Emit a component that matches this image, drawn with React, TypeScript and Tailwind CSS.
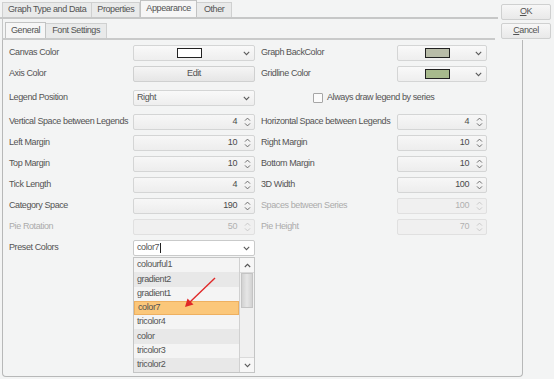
import React from 'react'

const ChevronDown = ({ color = '#5a5a5a' }: { color?: string }) => (
  <svg width="7" height="5" viewBox="0 0 7 5">
    <path d="M0.8 0.9 L3.5 3.6 L6.2 0.9" fill="none" stroke={color} strokeWidth="1.1" />
  </svg>
)

const SpinArrows = ({ disabled }: { disabled?: boolean }) => (
  <svg width="7" height="12" viewBox="0 0 7 12">
    <path
      d="M1 4.6 L3.5 2.1 L6 4.6 M1 7.4 L3.5 9.9 L6 7.4"
      fill="none"
      stroke={disabled ? '#c9c9c9' : '#6a6a6a'}
      strokeWidth="1"
    />
  </svg>
)

const Label = ({ children, disabled }: { children: React.ReactNode; disabled?: boolean }) => (
  <div className={`flex items-center h-[16px] whitespace-nowrap ${disabled ? 'text-[#ababab]' : 'text-[#535353]'}`}>
    {children}
  </div>
)

const ColorCombo = ({ swatch }: { swatch: string }) => (
  <div className="h-[16px] border border-[#d4d5d5] rounded-[2px] bg-gradient-to-b from-[#f9f9f9] to-[#eeeeee] flex items-center">
    <div className="flex-1 flex justify-center pl-[6px]">
      <div className={`w-[25px] h-[10px] border border-[#222] ${swatch}`} />
    </div>
    <div className="w-[16px] flex justify-center">
      <ChevronDown />
    </div>
  </div>
)

const Spinner = ({ value, disabled }: { value: number; disabled?: boolean }) => (
  <div
    className={`h-[16px] border rounded-[2px] flex items-center ${
      disabled ? 'border-[#e0e0e0] bg-[#f0f0f0] text-[#b0b0b0]' : 'border-[#d4d5d5] bg-gradient-to-b from-[#f7f7f7] to-[#ededed] text-[#4a4a4a]'
    }`}
  >
    <div className="flex-1 text-right pr-[3px]">{value}</div>
    <div className="w-[14px] flex justify-center">
      <SpinArrows disabled={disabled} />
    </div>
  </div>
)

const Row = ({ children, mt }: { children: React.ReactNode; mt: string }) => (
  <div className={`grid grid-cols-[124px_122px_6px_136px_90px] items-center ${mt}`}>{children}</div>
)

const PRESETS = ['colourful1', 'gradient2', 'gradient1', 'color7', 'tricolor4', 'color', 'tricolor3', 'tricolor2']

export default function App() {
  return (
    <div className="relative w-[554px] h-[379px] overflow-hidden bg-[#f3f4f4] font-['Liberation_Sans',Arial,sans-serif] text-[9px] tracking-[-0.4px] text-[#535353]">
      <div className="flex">
        {/* left: tabs and page */}
        <div className="w-[498px]">
          <div className="flex items-end h-[19px] pl-[2px] border-b-2 border-[#c6c7c7]">
            <div className="h-[15px] px-[5px] flex items-center border border-b-0 border-[#cfd0d0] bg-[#e9eaea]">Graph Type and Data</div>
            <div className="h-[15px] px-[5px] flex items-center border border-b-0 border-l-0 border-[#cfd0d0] bg-[#e9eaea]">Properties</div>
            <div className="h-[17px] px-[5px] flex items-center border border-b-0 border-[#c2c3c3] bg-[#f6f6f6]">Appearance</div>
            <div className="h-[15px] px-[7px] flex items-center border border-b-0 border-l-0 border-[#cfd0d0] bg-[#e9eaea]">Other</div>
          </div>
          <div className="border-l border-[#c6c7c7] ml-[2px] mr-[3px]">
            <div className="flex items-end h-[21px] pl-[2px] border-b-2 border-[#c9caca]">
              <div className="h-[16px] px-[5px] flex items-center border border-b-0 border-[#c2c3c3] bg-[#f6f6f6]">General</div>
              <div className="h-[15px] px-[6px] flex items-center border border-b-0 border-l-0 border-[#cfd0d0] bg-[#e9eaea]">Font Settings</div>
            </div>
          </div>

          <div className="pl-[9px]">
            <Row mt="mt-[5px]">
              <Label>Canvas Color</Label>
              <ColorCombo swatch="bg-white" />
              <div />
              <Label>Graph BackColor</Label>
              <ColorCombo swatch="bg-[#b8bca8]" />
            </Row>
            <Row mt="mt-[5px]">
              <Label>Axis Color</Label>
              <div className="h-[16px] border border-[#cfd0d0] rounded-[2px] bg-gradient-to-b from-[#f5f5f5] to-[#e6e6e6] flex items-center justify-center">
                Edit
              </div>
              <div />
              <Label>Gridline Color</Label>
              <ColorCombo swatch="bg-[#a8ba8d]" />
            </Row>
            <Row mt="mt-[8px]">
              <Label>Legend Position</Label>
              <div className="h-[16px] border border-[#d4d5d5] rounded-[2px] bg-gradient-to-b from-[#f9f9f9] to-[#eeeeee] flex items-center">
                <div className="flex-1 pl-[3px]">Right</div>
                <div className="w-[16px] flex justify-center">
                  <ChevronDown />
                </div>
              </div>
              <div />
              <div className="col-span-2 flex items-center h-[16px] pl-[52px]">
                <div className="w-[10px] h-[10px] border border-[#a6a6a6] rounded-[1px] bg-[#fbfbfb] mr-[4px]" />
                <span>Always draw legend by series</span>
              </div>
            </Row>
            <Row mt="mt-[8px]">
              <Label>Vertical Space between Legends</Label>
              <Spinner value={4} />
              <div />
              <Label>Horizontal Space between Legends</Label>
              <Spinner value={4} />
            </Row>
            <Row mt="mt-[5px]">
              <Label>Left Margin</Label>
              <Spinner value={10} />
              <div />
              <Label>Right Margin</Label>
              <Spinner value={10} />
            </Row>
            <Row mt="mt-[5px]">
              <Label>Top Margin</Label>
              <Spinner value={10} />
              <div />
              <Label>Bottom Margin</Label>
              <Spinner value={10} />
            </Row>
            <Row mt="mt-[5px]">
              <Label>Tick Length</Label>
              <Spinner value={4} />
              <div />
              <Label>3D Width</Label>
              <Spinner value={100} />
            </Row>
            <Row mt="mt-[5px]">
              <Label>Category Space</Label>
              <Spinner value={190} />
              <div />
              <Label disabled>Spaces between Series</Label>
              <Spinner value={100} disabled />
            </Row>
            <Row mt="mt-[5px]">
              <Label disabled>Pie Rotation</Label>
              <Spinner value={50} disabled />
              <div />
              <Label disabled>Pie Height</Label>
              <Spinner value={70} disabled />
            </Row>
            <Row mt="mt-[5px]">
              <Label>Preset Colors</Label>
              <div className="relative">
                <div className="h-[16px] border border-[#c9caca] rounded-[2px] bg-white flex items-center">
                  <div className="flex-1 pl-[3px] flex items-center">
                    color7<span className="inline-block w-px h-[10px] bg-[#222] ml-px" />
                  </div>
                  <div className="w-[16px] flex justify-center">
                    <ChevronDown />
                  </div>
                </div>
                {/* dropdown popup */}
                <div className="absolute left-0 top-[17px] w-[122px] h-[116px] border border-[#c4c5c5] bg-[#f4f4f4] flex z-10">
                  <div className="flex-1">
                    {PRESETS.map((p, i) => (
                      <div
                        key={p}
                        className={`h-[14.25px] pl-[3px] flex items-center ${
                          p === 'color7'
                            ? 'bg-[#fbc77a] border border-[#eeb060]'
                            : i % 2 === 1
                              ? 'bg-[#e8e8e8]'
                              : 'bg-[#f4f4f4]'
                        }`}
                      >
                        {p}
                      </div>
                    ))}
                  </div>
                  <div className="w-[15px] border-l border-[#d0d0d0] bg-[#f0f0f0] flex flex-col">
                    <div className="h-[15px] flex items-center justify-center border-b border-[#dadada] bg-[#f7f7f7]">
                      <svg width="7" height="5" viewBox="0 0 7 5">
                        <path d="M0.8 4 L3.5 1.3 L6.2 4" fill="none" stroke="#555" strokeWidth="1.1" />
                      </svg>
                    </div>
                    <div className="h-[35px] mx-[1px] bg-gradient-to-r from-[#d2d2d2] via-[#e6e6e6] to-[#d2d2d2] border border-[#c4c4c4]" />
                    <div className="flex-1" />
                    <div className="h-[15px] flex items-center justify-center border-t border-[#dadada] bg-[#f7f7f7]">
                      <ChevronDown />
                    </div>
                  </div>
                </div>
              </div>
              <div />
              <div />
              <div />
            </Row>
          </div>
        </div>

        {/* right: dialog buttons */}
        <div className="flex flex-col gap-[3px] pt-[4px] pl-[3px]">
          <div className="w-[50px] h-[16px] border border-[#cfd0d0] rounded-[2px] bg-gradient-to-b from-[#f7f7f7] to-[#e9e9e9] flex items-center justify-center">
            <span className="underline">O</span>K
          </div>
          <div className="w-[50px] h-[16px] border border-[#cfd0d0] rounded-[2px] bg-gradient-to-b from-[#f7f7f7] to-[#e9e9e9] flex items-center justify-center">
            <span className="underline">C</span>ancel
          </div>
        </div>
      </div>

      {/* dialog frame */}
      <div className="absolute left-[2px] top-[40px] w-[521px] h-[337px] border-l border-r border-b border-[#b7b8b8] rounded-b-[4px] pointer-events-none" />

      {/* annotation arrow */}
      <svg className="absolute left-0 top-0 pointer-events-none z-20" width="554" height="379">
        <line x1="215" y1="278" x2="190" y2="302" stroke="#e02828" strokeWidth="1.4" />
        <path d="M185 307 L187.5 298.5 L193.5 304.5 Z" fill="#e02828" />
      </svg>
    </div>
  )
}
